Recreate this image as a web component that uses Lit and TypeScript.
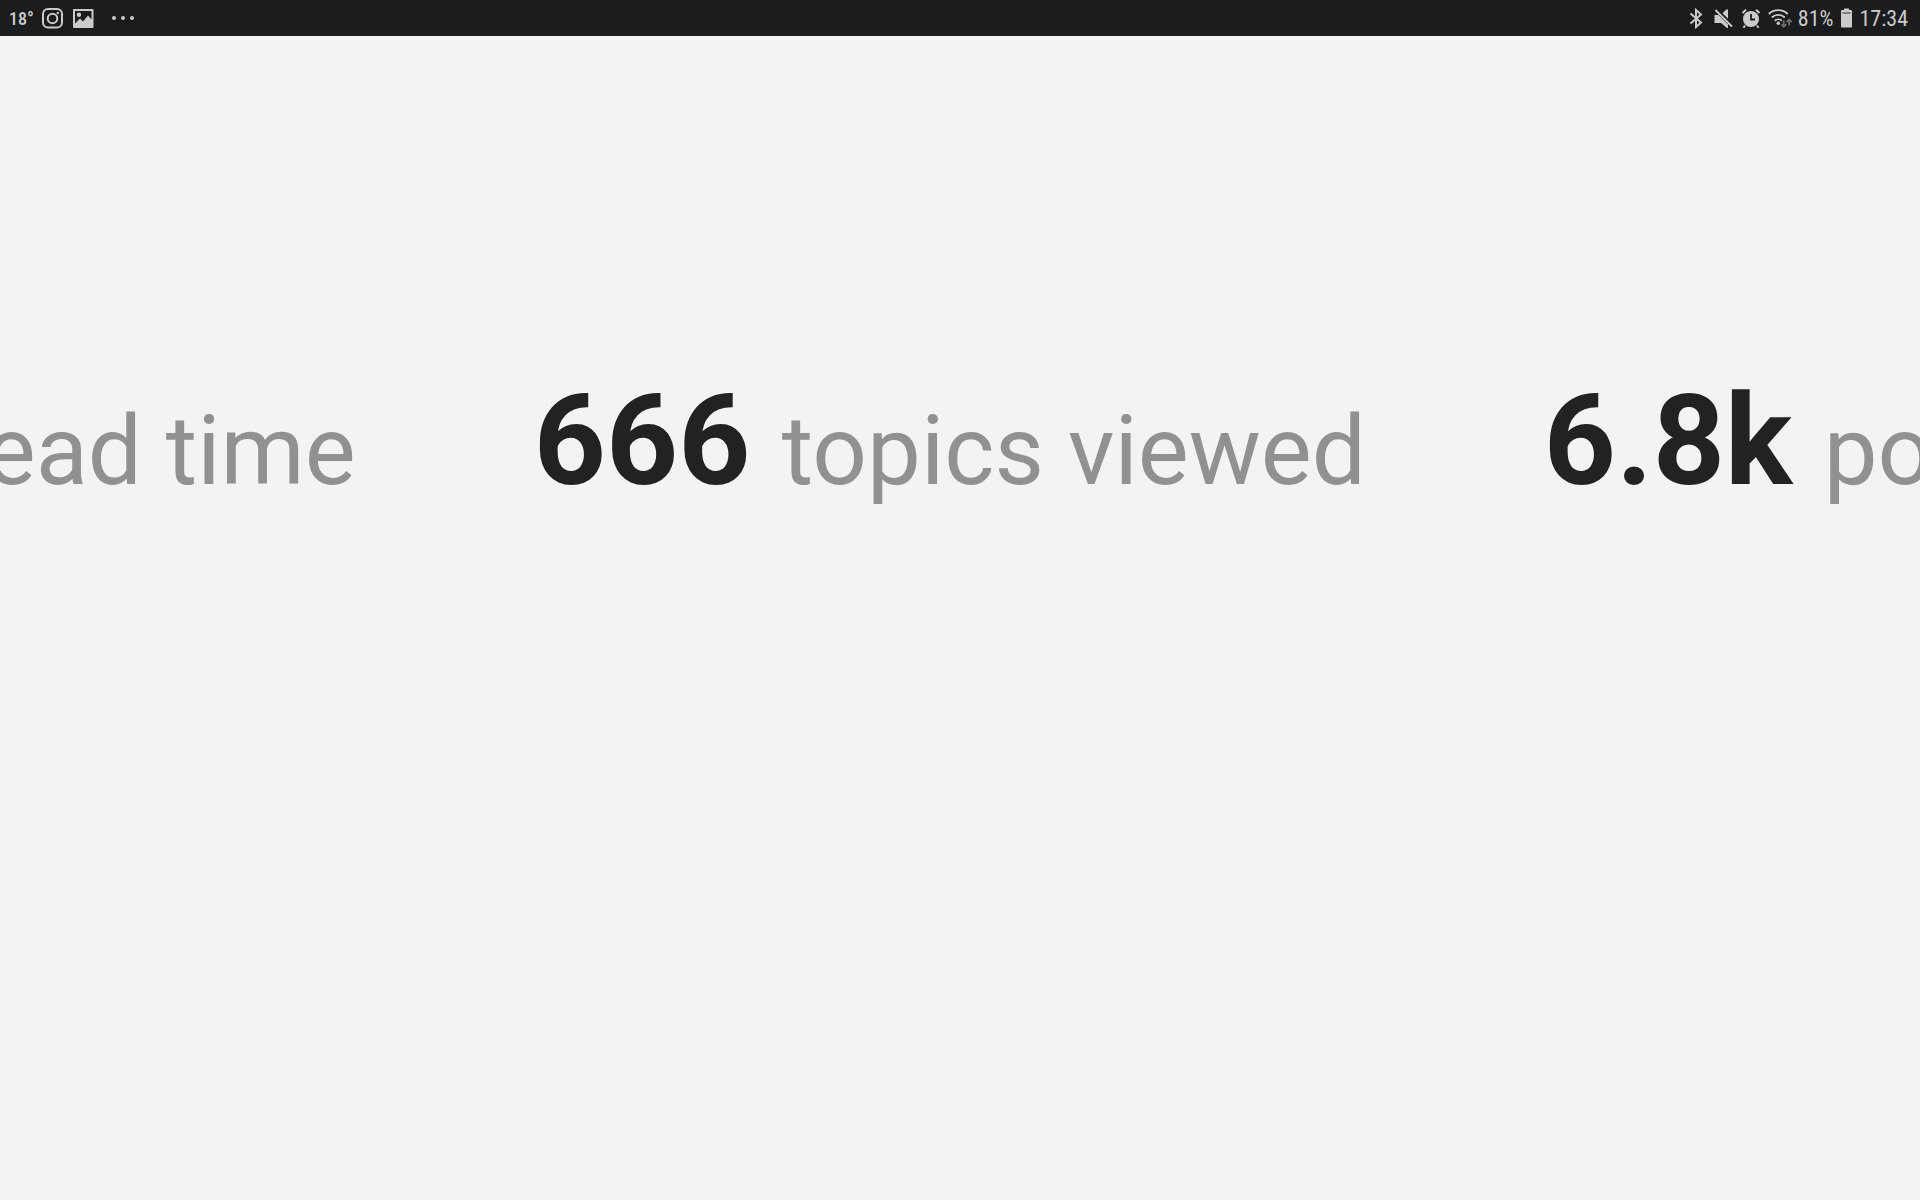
import { LitElement, html, css, nothing } from "lit";
import { customElement } from "lit/decorators.js";

@customElement("status-bar")
class StatusBar extends LitElement {
  static styles = css`
    :host {
      display: flex;
      justify-content: space-between;
      align-items: center;
      height: 36px;
      padding: 2px 12px 0 9px;
      box-sizing: border-box;
      background: #1b1c1e;
      color: #cbcbcb;
      font-family: "Roboto Condensed", "Liberation Sans Narrow", Roboto, sans-serif;
      white-space: nowrap;
    }
    .group {
      display: flex;
      align-items: center;
      gap: 8px;
    }
    .status {
      gap: 6px;
    }
    .temp {
      font-size: 18px;
      font-weight: 500;
      line-height: 34px;
    }
    .value {
      font-size: 22px;
      line-height: 34px;
    }
    .dots {
      margin-left: 8px;
    }
    svg {
      display: block;
      flex: none;
    }
  `;

  render() {
    return html`
      <div class="group">
        <span class="temp">18°</span>
        <svg width="22" height="22" viewBox="0 0 22 22" fill="none" stroke="#cbcbcb" stroke-width="2">
          <rect x="1" y="1" width="19" height="18.5" rx="5" />
          <circle cx="10.5" cy="10.5" r="4.8" />
          <circle cx="15.8" cy="5" r="1.2" fill="#cbcbcb" stroke="none" />
        </svg>
        <svg width="22" height="22" viewBox="0 0 22 22">
          <path fill="#cbcbcb" fill-rule="evenodd" d="M2 1h18.500a1 1 0 0 1 1 1v17a1 1 0 0 1-1 1H2a1 1 0 0 1-1-1v-17a1 1 0 0 1 1-1zM3 3v12.500l5-5 3 3 5-6 3.500 4V3z" />
          <circle cx="7" cy="6.700" r="2.200" fill="#cbcbcb" />
        </svg>
        <svg class="dots" width="24" height="22" viewBox="0 0 24 22" fill="#cbcbcb">
          <circle cx="4" cy="10" r="2" />
          <circle cx="13" cy="10" r="2" />
          <circle cx="22" cy="10" r="2" />
        </svg>
      </div>
      <div class="group status">
        <svg width="18" height="22" viewBox="0 0 18 22" fill="none" stroke="#cbcbcb" stroke-width="2">
          <path d="M2.500 5.500l10.500 9-5 4.500V2L13 6.500 2.500 15.500" />
        </svg>
        <svg width="23" height="22" viewBox="0 0 23 22">
          <path fill="#cbcbcb" d="M2.500 7h4L16 16.500v3.500h-1L9 15H2.500zM10.500 5.300L14.300 1.500H16v9.300z" />
          <path d="M3.500 2l16.500 16.500" stroke="#cbcbcb" stroke-width="2" />
          <path d="M5 1.300L21 17.300" stroke="#1b1c1e" stroke-width="1" />
        </svg>
        <svg width="21" height="22" viewBox="0 0 21 22">
          <circle cx="10" cy="11" r="8" fill="#cbcbcb" />
          <path d="M1.500 5L5 1.700M18.500 5L15 1.700M4 17.500l-1.500 2.200M16 17.500l1.500 2.200" stroke="#cbcbcb" stroke-width="2" fill="none" />
          <path d="M10 6v5.500h4" stroke="#1b1c1e" stroke-width="1.800" fill="none" />
        </svg>
        <svg width="24" height="22" viewBox="0 0 24 22" fill="none" stroke="#cbcbcb" stroke-width="1.900">
          <path d="M.8 6a13.500 13.500 0 0 1 19 0M3.800 9.500a9.300 9.300 0 0 1 13 0M6.800 12.800a5 5 0 0 1 7 0" />
          <circle cx="10.300" cy="15.300" r="1.700" fill="#cbcbcb" stroke="none" />
          <path stroke="#77787a" stroke-width="1.500" d="M15.800 12.500v6M13.300 16.300l2.500 2.500 2.500-2.500M21.200 17.500v-6M18.700 14l2.500-2.500L23.700 14" />
        </svg>
        <span class="value">81%</span>
        <svg width="14" height="22" viewBox="0 0 14 22">
          <path fill="#cbcbcb" d="M5 .5h5v1.500h2a1 1 0 0 1 1 1V18.500a1 1 0 0 1-1 1H3a1 1 0 0 1-1-1V3a1 1 0 0 1 1-1h2z" />
          <path d="M3.500 5h8" stroke="#68696a" stroke-width="1.600" />
        </svg>
        <span class="value">17:34</span>
      </div>
    `;
  }
}

interface Stat {
  value?: string;
  label: string;
}

@customElement("app-root")
class AppRoot extends LitElement {
  static styles = css`
    :host {
      display: flex;
      flex-direction: column;
      min-height: 100vh;
      background: #f1f3f5;
      font-family: Roboto, sans-serif;
    }
    .stats {
      display: flex;
      justify-content: center;
      align-items: baseline;
      gap: 178px;
      margin: 0;
      padding: 330px 3px 0 0;
      list-style: none;
      overflow: hidden;
      white-space: nowrap;
    }
    .stat {
      flex: none;
      font-size: 96px;
      line-height: 150px;
      color: #919191;
    }
    .number {
      font-size: 126px;
      font-weight: 700;
      color: #222222;
    }
  `;

  private stats: Stat[] = [
    { label: "ead time" },
    { value: "666", label: "topics viewed" },
    { value: "6.8k", label: "po" },
  ];

  render() {
    return html`
      <status-bar></status-bar>
      <ul class="stats">
        ${this.stats.map(
          (s) => html`<li class="stat">${s.value ? html`<span class="number">${s.value} </span>` : nothing}${s.label}</li>`
        )}
      </ul>
    `;
  }
}
